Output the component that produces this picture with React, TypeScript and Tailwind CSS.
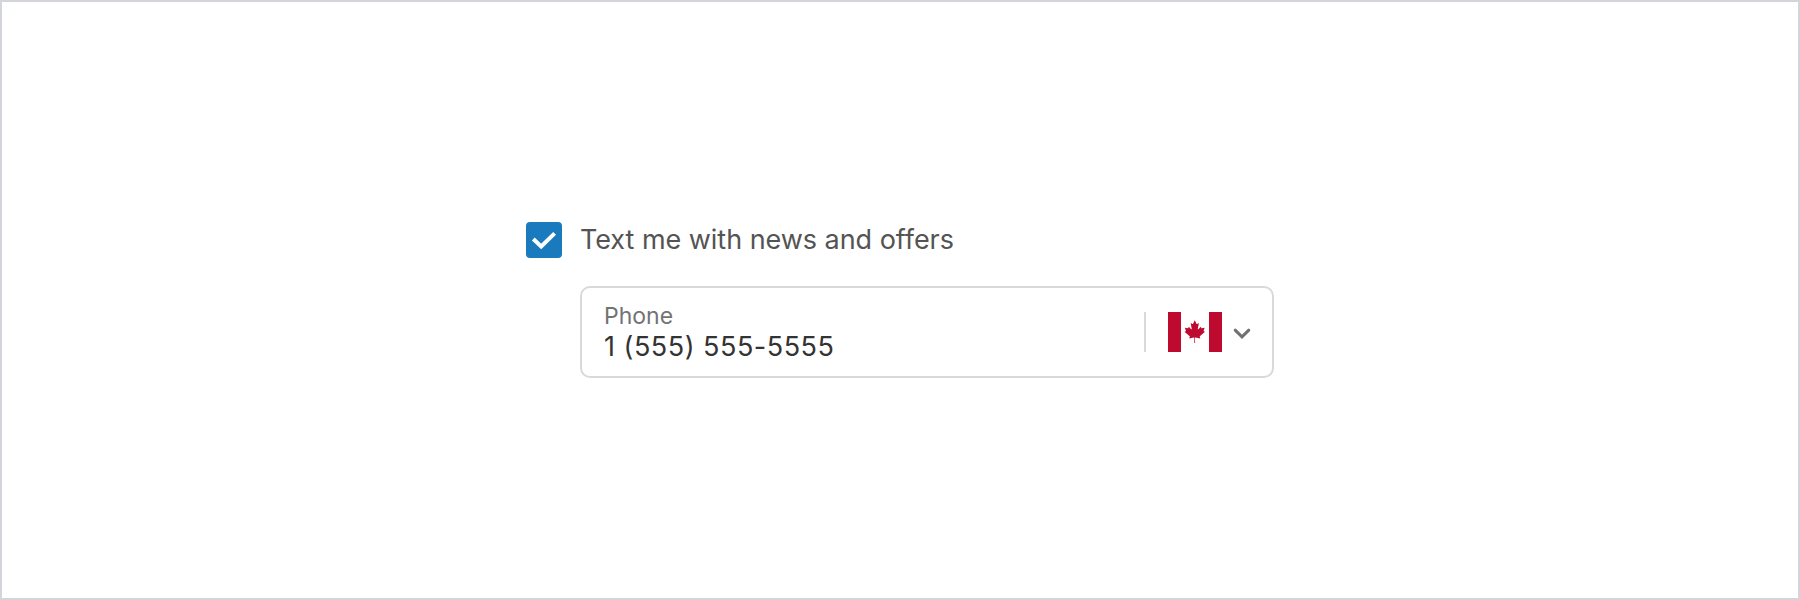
function CheckIcon() {
  return (
    <svg className="size-9" viewBox="0 0 36 36" fill="none">
      <path d="M7.3 17 15.2 24.4 28.6 11.4" stroke="#fff" strokeWidth="4" />
    </svg>
  );
}

function CanadaFlag() {
  return (
    <svg className="h-10 w-[54px]" viewBox="0 0 54 40">
      <rect width="54" height="40" fill="#fff" />
      <path d="M0 0h13v40H0zM41 0h13v40H41z" fill="#bf0a30" />
      <path
        transform="translate(26.6 19.5) scale(.0055 .00565)"
        fill="#bf0a30"
        d="m-60 2030 20-863a95 95 0 0 0-111-98l-834 151 116-320a65 65 0 0 0-20-73l-941-762 212-99a65 65 0 0 0 34-79l-186-572 542 115a65 65 0 0 0 73-38l105-247 423 454a65 65 0 0 0 111-57l-204-1052 327 189a65 65 0 0 0 91-27l332-652 332 652a65 65 0 0 0 91 27l327-189-204 1052a65 65 0 0 0 111 57l423-454 105 247a65 65 0 0 0 73 38l542-115-186 572a65 65 0 0 0 34 79l212 99-941 762a65 65 0 0 0-20 73l116 320-864-151a95 95 0 0 0-111 98l20 863z"
      />
    </svg>
  );
}

function ChevronIcon() {
  return (
    <svg className="h-5 w-5" viewBox="0 0 20 20" fill="none">
      <path d="m3.2 8.2 6.8 6.6 6.8-6.6" stroke="#707070" strokeWidth="3" strokeLinecap="round" />
    </svg>
  );
}

export default function App() {
  return (
    <div className="flex h-[600px] w-[1800px] justify-center border-2 border-[#d2d5d9] bg-white pt-[220px] font-['Inter',sans-serif]">
      <div className="flex w-[748px] flex-col">
        <div className="flex h-9 items-center gap-[18px]">
          <span className="flex size-9 rounded-[4px] bg-[#197bbd]">
            <CheckIcon />
          </span>
          <span className="text-[27px] leading-9 tracking-[-0.04px] whitespace-nowrap text-[#545454]">
            Text me with news and offers
          </span>
        </div>
        <div className="mt-7 ml-[54px] flex h-[92px] items-center rounded-[10px] border-2 border-[#d9d9d9] pr-[20px] pl-[22px]">
          <div className="flex flex-1 flex-col">
            <span className="text-[23px] leading-[30px] text-[#737373]">Phone</span>
            <span className="text-[27px] leading-[32px] tracking-[0.5px] text-[#333333]">1 (555) 555-5555</span>
          </div>
          <div className="mr-[22px] h-10 w-0.5 bg-[#d9d9d9]" />
          <CanadaFlag />
          <div className="ml-[10px]">
            <ChevronIcon />
          </div>
        </div>
      </div>
    </div>
  );
}
